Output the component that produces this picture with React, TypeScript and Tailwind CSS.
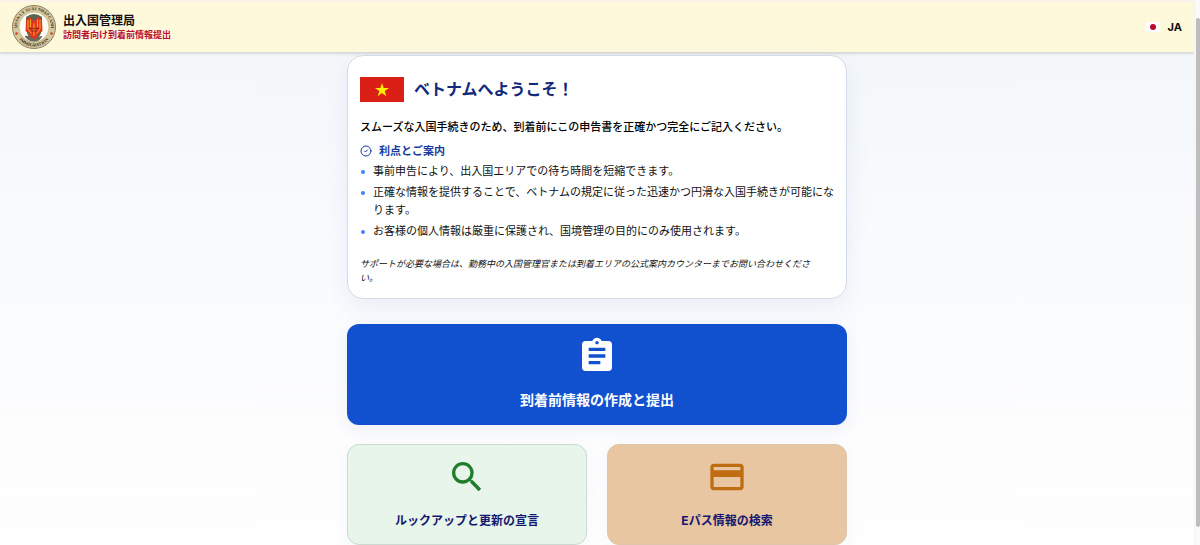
import { CircleCheck } from "lucide-react";
import { MdAssignment, MdCreditCard, MdSearch } from "react-icons/md";

const benefits = [
  "事前申告により、出入国エリアでの待ち時間を短縮できます。",
  "正確な情報を提供することで、ベトナムの規定に従った迅速かつ円滑な入国手続きが可能になります。",
  "お客様の個人情報は厳重に保護され、国境管理の目的にのみ使用されます。",
];

function Emblem() {
  return (
    <svg viewBox="0 0 88 88" className="size-11 shrink-0" role="img" aria-label="Immigration">
      <defs>
        <path id="ring-top" d="M14 60 A34 34 0 1 1 74 60" />
        <path id="ring-bottom" d="M8 58 A38.5 38.5 0 0 0 80 58" />
      </defs>
      <circle cx="44" cy="44" r="43" fill="#d6c79c" stroke="#8c8062" strokeWidth="2" />
      <circle cx="44" cy="44" r="30" fill="#fffef5" stroke="#a89a70" strokeWidth="1" />
      <text fontSize="8" fontWeight="700" fill="#2f2b20" fontFamily="Liberation Serif, serif" textAnchor="middle">
        <textPath href="#ring-top" startOffset="50%">QUẢN LÝ XUẤT NHẬP CẢNH</textPath>
      </text>
      <text fontSize="9" fontWeight="700" fill="#2f2b20" fontFamily="Liberation Serif, serif" textAnchor="middle">
        <textPath href="#ring-bottom" startOffset="50%">IMMIGRATION</textPath>
      </text>
      <circle cx="9" cy="57" r="2.5" fill="#d33a22" />
      <circle cx="79" cy="57" r="2.5" fill="#d33a22" />
      <path d="M28 24 Q44 12 60 24 V50 Q56 65 44 73 Q32 65 28 50Z" fill="#5d644f" />
      <path d="M28 30 L36 24 L44 33 L52 24 L60 30 L61 52 L53 57 L51 65 L44 70 L37 65 L35 57 L27 52Z" fill="#e5341d" />
      <path d="M32 30 V48 M37 29 V44 M44 37 V62 M51 29 V44 M56 30 V48 M32 48 L39 57 M56 48 L49 57" fill="none" stroke="#f3ae27" strokeWidth="2" />
      <path d="M33 47 H55 M38 52 H50" stroke="#8e3020" strokeWidth="2" />
      <path d="M25 62 Q36 60 44 69 Q52 62 61 62 Q56 73 44 73 Q32 73 25 62Z" fill="#686a5b" />
    </svg>
  );
}

function VietnamFlag() {
  return (
    <svg viewBox="0 0 44 25" className="h-[25px] w-11 shrink-0" role="img" aria-label="ベトナム">
      <rect width="44" height="25" fill="#da1f17" />
      <path d="M22 6 L23.7 11 H29 L24.7 14.1 L26.3 19.2 L22 16.1 L17.7 19.2 L19.3 14.1 L15 11 H20.3Z" fill="#ffed00" />
    </svg>
  );
}

function Header() {
  return (
    <header className="flex h-[53px] items-center justify-between border-t-2 border-b border-t-[#fbf0ec] border-b-[#dddcd8] bg-[#fff9dc] px-3 shadow-sm">
      <div className="flex items-center gap-[7px]">
        <Emblem />
        <div>
          <h1 className="text-[12px] leading-[14px] font-bold text-[#111]">出入国管理局</h1>
          <p className="text-[9px] leading-[13px] font-bold text-[#b90d32]">訪問者向け到着前情報提出</p>
        </div>
      </div>
      <button type="button" className="flex items-center gap-2 text-[11px] font-bold text-[#111]">
        <span className="flex h-[10px] w-[14px] items-center justify-center bg-white">
          <span className="size-[6px] rounded-full bg-[#b90c2b]" />
        </span>
        JA
      </button>
    </header>
  );
}

function Welcome() {
  return (
    <section className="rounded-2xl border border-[#d3dbe6] bg-white px-3 pt-[21px] pb-[13px] shadow-[0_8px_24px_rgba(30,64,175,0.08)]">
      <div className="flex items-center gap-[10px]">
        <VietnamFlag />
        <h2 className="text-[16px] leading-[25px] font-bold text-[#12297c]">ベトナムへようこそ！</h2>
      </div>
      <p className="mt-4 text-[11px] leading-[18px] font-medium text-black">
        スムーズな入国手続きのため、到着前にこの申告書を正確かつ完全にご記入ください。
      </p>
      <h3 className="mt-[6px] flex items-center gap-[7px] text-[11px] leading-[18px] font-bold text-[#173a9e]">
        <CircleCheck className="size-3" strokeWidth={2} />
        利点とご案内
      </h3>
      <ul className="mt-[2px] space-y-[3px] text-[11px] leading-[18px] text-[#111]">
        {benefits.map((item) => (
          <li key={item} className="flex gap-2">
            <span className="mt-2 ml-px size-[4px] shrink-0 rounded-full bg-[#3b82f6]" />
            <span className="-mr-1">{item}</span>
          </li>
        ))}
      </ul>
      <p className="mt-[17px] pr-4 text-[9px] leading-[14px] text-[#111] italic">
        サポートが必要な場合は、勤務中の入国管理官または到着エリアの公式案内カウンターまでお問い合わせください。
      </p>
    </section>
  );
}

export default function App() {
  return (
    <div
      lang="ja"
      className="flex min-h-screen bg-white font-['Inter','Noto_Sans_CJK_JP',sans-serif]"
    >
      <div className="min-w-0 flex-1 bg-linear-to-b from-[#f2f7fa] via-[#fafbfd] to-[#fefefe]">
        <Header />
        <main className="mx-auto w-full max-w-[500px] pt-[2px]">
          <Welcome />
          <button
            type="button"
            className="mt-[25px] flex w-full flex-col items-center rounded-xl bg-[#1150cf] pt-3 pb-[15px] text-[14px] leading-5 font-bold text-white shadow-[0_4px_16px_rgba(30,64,175,0.08)]"
          >
            <MdAssignment className="mb-[14px] size-10" />
            到着前情報の作成と提出
          </button>
          <div className="mt-[19px] grid grid-cols-2 gap-5">
            <button
              type="button"
              className="flex flex-col items-center rounded-xl border border-[#ccd9d0] bg-[#e7f5ea] pt-3 pb-[13px] text-[12px] leading-5 font-bold text-[#15186f] shadow-[0_4px_16px_rgba(30,64,175,0.04)]"
            >
              <MdSearch className="mb-[14px] size-10 text-[#207d2b]" />
              ルックアップと更新の宣言
            </button>
            <button
              type="button"
              className="flex flex-col items-center rounded-xl border border-[#dfc6aa] bg-[#e7c6a1] pt-3 pb-[13px] text-[12px] leading-5 font-bold text-[#15186f] shadow-[0_4px_16px_rgba(30,64,175,0.04)]"
            >
              <MdCreditCard className="mb-[14px] size-10 text-[#bf6c12]" />
              Eパス情報の検索
            </button>
          </div>
        </main>
      </div>
      <div className="flex w-[6px] flex-col border-l border-[#f3f3f3] bg-[#fafafa] pt-[18px] pb-[18px] pl-px" aria-hidden="true">
        <div className="flex-1 rounded-sm bg-[#bdbdbd]" />
      </div>
    </div>
  );
}
